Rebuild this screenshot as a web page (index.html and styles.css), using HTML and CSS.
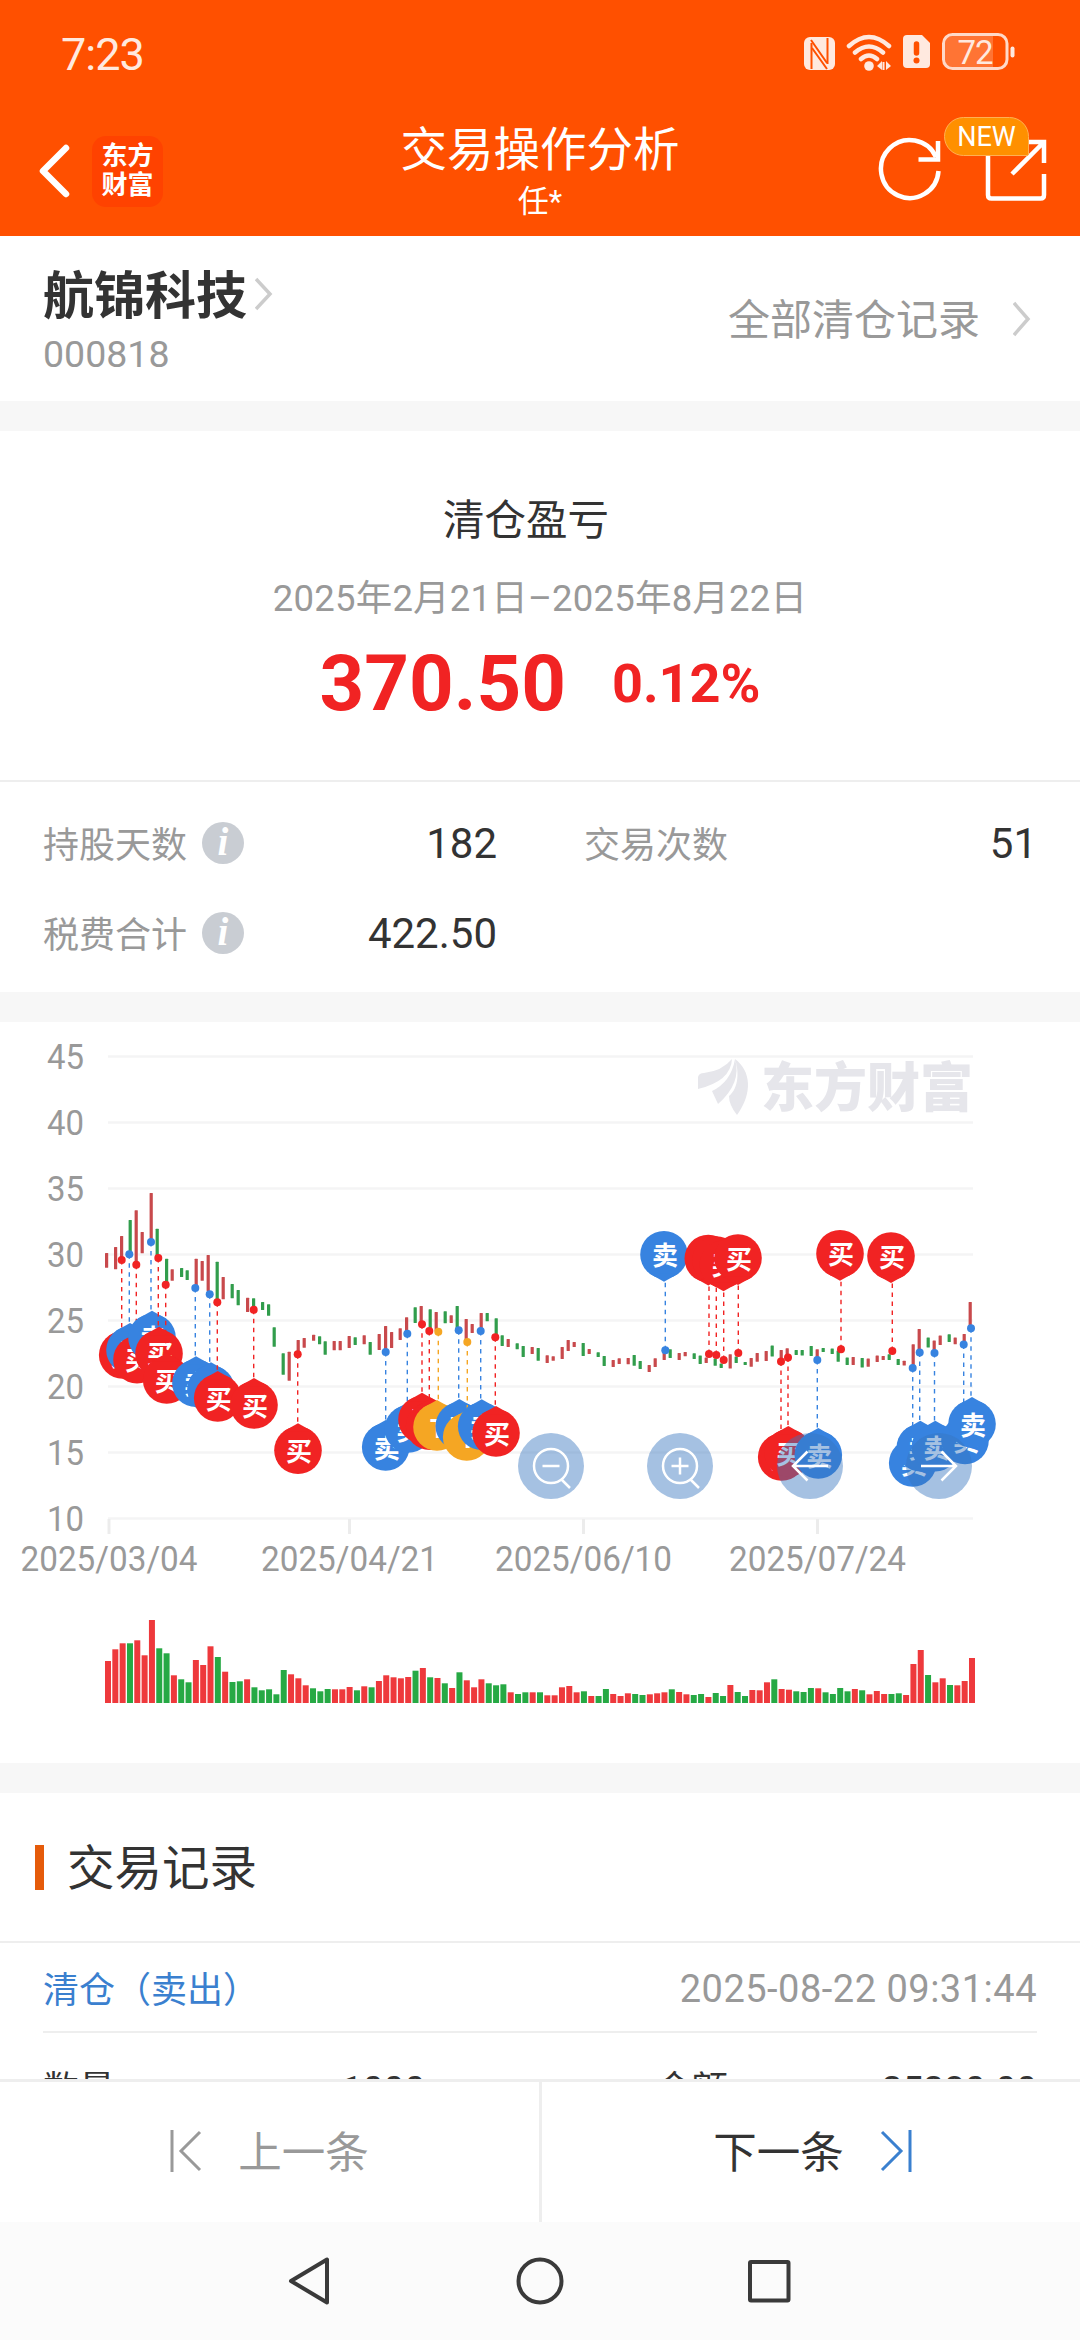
FILE: index.html
```
<!DOCTYPE html>
<html lang="zh-CN">
<head>
	<meta charset="UTF-8">
	<title>交易操作分析</title>
	<link rel="stylesheet" href="styles.css">
</head>
<body>
	<header class="header">
		<div class="status">
			<span class="time">7:23</span>
			<svg class="statusIcons" width="216" height="44" viewBox="800 30 216 44">
				<rect x="804" y="37" width="31" height="33" rx="6" fill="#ffe9df"/>
				<path d="M811.500 69V43M827.500 38v26" fill="none" stroke="#ff5000" stroke-width="2"/>
				<path d="M811 40l16 23M812 48l15 21" fill="none" stroke="#ff5000" stroke-width="2"/>
				<g fill="none" stroke="#ffe9df" stroke-width="4.500" stroke-linecap="round">
					<path d="M849 46q20-18 40 0M855 52.500q14-12 28 0M861 59q8-7 16 0"/>
				</g>
				<circle cx="869" cy="66" r="4.800" fill="#ffe9df"/>
				<path d="M877 66l5-5v9zM891 66l-5-5v9zM882.500 62h2v8h-2z" fill="#ffe9df"/>
				<path d="M907 35h15l8 8v21q0 4-4 4h-19q-4 0-4-4V39q0-4 4-4z" fill="#ffe9df"/>
				<path d="M916.500 44v9" stroke="#ff5000" stroke-width="5.500" stroke-linecap="round"/>
				<circle cx="916.500" cy="60.500" r="3" fill="#ff5000"/>
				<path d="M953 36h40v31h-40q-8 0-8-8V44q0-8 8-8z" fill="#ff7434"/>
				<rect x="943.500" y="34.500" width="63.500" height="34" rx="9" fill="none" stroke="#ffd9c8" stroke-width="3"/>
				<path d="M1012.500 48.500v7" stroke="#ffe9df" stroke-width="4" stroke-linecap="round"/>
				<text class="battery" x="975" y="63.500" text-anchor="middle">72</text>
			</svg>
		</div>
		<div class="navbar">
			<div class="navLeft">
				<svg width="32" height="56" viewBox="0 0 32 56"><path d="M28 5L5 28l23 23" fill="none" stroke="#fff" stroke-width="6.500" stroke-linecap="round" stroke-linejoin="round"/></svg>
				<div class="logo">东方<br>财富</div>
			</div>
			<div class="title">
				<h1>交易操作分析</h1>
				<p>任*</p>
			</div>
			<div class="navRight">
				<svg width="176" height="70" viewBox="873 134 176 70" fill="none" stroke="#fff" stroke-width="4.500">
					<path d="M937.500 171A28.800 29 0 1 1 935 157"/>
					<path d="M937 141v18.500h-19.500"/>
					<path d="M987 150v45q0 3.500 3.500 3.500h49q3.500 0 3.500-3.500V174"/>
					<path d="M1025 142h18v21M1042 143l-31 31"/>
				</svg>
				<span class="badge">NEW</span>
			</div>
		</div>
	</header>

	<section class="stock">
		<div>
			<div class="stockName"><span>航锦科技</span><svg width="18" height="34" viewBox="0 0 18 34"><path d="M1 2l14 15L1 32" fill="none" stroke="#ccc" stroke-width="3.500"/></svg></div>
			<div class="stockCode">000818</div>
		</div>
		<div class="allRecords"><span>全部清仓记录</span><svg width="18" height="36" viewBox="0 0 18 36"><path d="M1 2l14 16L1 34" fill="none" stroke="#ccc" stroke-width="3.500"/></svg></div>
	</section>

	<section class="profit">
		<h2>清仓盈亏</h2>
		<p class="period">2025年2月21日–2025年8月22日</p>
		<p class="amount"><b>370.50</b><b class="rate">0.12%</b></p>
	</section>
	<section class="stats">
		<div class="stat"><span>持股天数</span><i class="info">i</i><em>182</em></div>
		<div class="stat"><span>交易次数</span><em>51</em></div>
		<div class="stat"><span>税费合计</span><i class="info">i</i><em>422.50</em></div>
	</section>

	<section class="chart">
		<svg id="chart" width="1080" height="741" viewBox="0 1022 1080 741"></svg>
		<div class="chartBtns">
			<svg class="chartBtn" viewBox="0 0 66 66"><circle cx="33" cy="33" r="17"/><path d="M24.500 33h17M43 46l9 9"/></svg>
			<svg class="chartBtn" viewBox="0 0 66 66"><circle cx="33" cy="33" r="17"/><path d="M24.500 33h17M33 24.500v17M43 46l9 9"/></svg>
			<svg class="chartBtn" viewBox="0 0 66 66"><path d="M51 33H17M30.500 18.500L16 33l14.500 14.500"/></svg>
			<svg class="chartBtn" viewBox="0 0 66 66"><path d="M15 33h34M35.500 18.500L50 33 35.500 47.500"/></svg>
		</div>
	</section>

	<section class="records">
		<h2><span>交易记录</span></h2>
		<div class="record">
			<div class="recordHead"><span>清仓（卖出）</span><time>2025-08-22 09:31:44</time></div>
			<div class="recordRow"><span>数量</span><span class="qty">1000</span><span>金额</span><span class="sum">25280.00</span></div>
		</div>
	</section>

	<footer class="pager">
		<div class="prev">
			<svg width="32" height="44" viewBox="0 0 32 44" fill="none" stroke="#999" stroke-width="3"><path d="M2 1v42M30 3L11 22l19 19"/></svg>
			<span>上一条</span>
		</div>
		<div class="next">
			<span>下一条</span>
			<svg width="32" height="44" viewBox="0 0 32 44" fill="none" stroke="#3a80cf" stroke-width="3"><path d="M30 1v42M2 3l19 19L2 41"/></svg>
		</div>
	</footer>
	<nav class="sysNav">
		<svg width="1080" height="118" viewBox="0 2222 1080 118" fill="none" stroke="#3a3a3a" stroke-width="4" stroke-linejoin="round">
			<path d="M327 2259.500v43l-36-21.500z"/>
			<circle cx="540" cy="2281" r="21.500"/>
			<rect x="750" y="2262" width="38.500" height="38.500" rx="1"/>
		</svg>
	</nav>

	<script src="chart.js"></script>
</body>
</html>
```
FILE: styles.css
```
* {
	box-sizing: border-box;
}
body {
	margin: 0;
	width: 1080px;
	height: 2340px;
	overflow: hidden;
	display: flex;
	flex-direction: column;
	background-color: #fff;
	color: #333;
	font-family: Roboto, "Noto Sans CJK SC", sans-serif;
}
h1, h2, p {
	margin: 0;
	font-weight: 400;
}
svg {
	display: block;
	flex: none;
}
section, header, footer, nav {
	flex: none;
}
.header {
	height: 236px;
	background-color: #ff5000;
	color: #fff;
}
.status {
	height: 108px;
	padding: 0 64px 0 61px;
	display: flex;
	align-items: center;
	justify-content: space-between;
}
.time {
	font-size: 45px;
	letter-spacing: -1px;
	color: #ffe9df;
}
.statusIcons {
	margin-top: -4px;
}
.battery {
	font-size: 33px;
	letter-spacing: -1px;
	fill: #ffe9df;
}
.navbar {
	height: 128px;
	padding: 10px 30px 0 38px;
	display: grid;
	grid-template-columns: 1fr 400px 1fr;
}
.navLeft {
	display: flex;
	align-items: center;
	gap: 22px;
	height: 108px;
	margin-top: -1px;
}
.logo {
	width: 71px;
	height: 71px;
	padding-top: 6px;
	border-radius: 14px;
	background-color: #ff4200;
	font-size: 26px;
	font-weight: 700;
	line-height: 29px;
	text-align: center;
}
.title {
	text-align: center;
	margin-left: -14px;
	margin-right: -6px;
}
.title h1 {
	font-size: 46.5px;
	line-height: 64px;
}
.title p {
	font-size: 31px;
	line-height: 40px;
}
.navRight {
	position: relative;
	justify-self: end;
	padding-top: 16px;
}
.badge {
	position: absolute;
	left: 70px;
	top: -1px;
	width: 85px;
	height: 39px;
	border: 1px solid #ffb054;
	border-radius: 20px 20px 2px 20px;
	background-color: #ff9000;
	font-size: 27px;
	line-height: 38px;
	text-align: center;
}
.stock {
	height: 195px;
	padding: 29px 49px 0 43px;
	border-bottom: 30px solid #f7f7f7;
	display: flex;
	justify-content: space-between;
}
.stockName {
	display: flex;
	align-items: center;
	gap: 8px;
	height: 58px;
	font-size: 51px;
	font-weight: 700;
}
.stockName span, .allRecords span {
	margin-top: -5px;
}
.stockCode {
	font-size: 37.5px;
	line-height: 62px;
	color: #999;
}
.allRecords {
	display: flex;
	align-items: center;
	gap: 33px;
	height: 108px;
	font-size: 42px;
	color: #999;
}
.profit {
	height: 351px;
	padding-top: 60px;
	border-bottom: 2px solid #eee;
	text-align: center;
}
.profit h2 {
	margin-left: -28px;
	font-size: 41.5px;
	line-height: 60px;
}
.period {
	margin-top: 18px;
	font-size: 36.5px;
	line-height: 60px;
	letter-spacing: .2px;
	color: #999;
}
.amount {
	display: flex;
	justify-content: center;
	align-items: center;
	gap: 46px;
	height: 108px;
	font-size: 78px;
	color: #f12323;
}
.amount .rate {
	font-size: 54px;
}
.stats {
	height: 240px;
	padding: 16px 45px 0 43px;
	border-bottom: 30px solid #f7f7f7;
	display: grid;
	grid-template-columns: 454px 453px;
	grid-auto-rows: 90px;
	column-gap: 87px;
}
.stat {
	display: flex;
	align-items: center;
	font-size: 36px;
	color: #999;
}
.stat span {
	margin-top: -3px;
}
.stat em {
	margin-left: auto;
	font-size: 42px;
	font-style: normal;
	color: #333;
}
.info {
	width: 42px;
	height: 42px;
	margin-left: 15px;
	border-radius: 50%;
	background-color: #c9cdd3;
	color: #fff;
	font: italic 700 39px/39px "Liberation Serif", serif;
	text-align: center;
}
.chart {
	position: relative;
	height: 771px;
	border-bottom: 30px solid #f7f7f7;
}
.axis {
	font-size: 35px;
	fill: #999;
}
.watermark {
	font-size: 53px;
	font-weight: 900;
	fill: #e6e6eb;
}
.pinText {
	font-size: 26px;
	font-weight: 700;
	fill: #fff;
	text-anchor: middle;
}
/* floating over the candles and pins */
.chartBtns {
	position: absolute;
	left: 518px;
	top: 411px;
	display: flex;
	gap: 63.3px;
}
.chartBtn {
	width: 66px;
	height: 66px;
	border-radius: 50%;
	background-color: rgba(55, 118, 191, .45);
	fill: none;
	stroke: #fff;
	stroke-width: 2.5;
}
.records {
	height: 286px;
	overflow: hidden;
}
.records h2 {
	display: flex;
	align-items: center;
	height: 150px;
	padding-left: 35px;
	border-bottom: 2px solid #eee;
	font-size: 47.5px;
}
.records h2 span {
	margin-top: -6px;
}
.records h2::before {
	content: "";
	width: 9px;
	height: 45px;
	margin-right: 23px;
	background-color: #e55b0a;
}
.record {
	padding: 0 43px;
}
.recordHead {
	display: flex;
	justify-content: space-between;
	align-items: center;
	height: 90px;
	border-bottom: 2px solid #eee;
	font-size: 36px;
	color: #3a80cf;
}
.recordHead time {
	font-size: 38px;
	letter-spacing: .5px;
	padding-top: 3px;
	color: #999;
}
.recordRow {
	display: grid;
	grid-template-columns: 299px 314px 1fr auto;
	padding-top: 27px;
	font-size: 36px;
	line-height: 60px;
}
.qty, .sum {
	font-size: 37px;
}
.pager {
	height: 143px;
	border-top: 3px solid #eee;
	display: grid;
	grid-template-columns: 542px 538px;
	font-size: 43.5px;
}
.pager div {
	display: flex;
	align-items: center;
	justify-content: center;
	gap: 36px;
}
.pager span {
	margin-top: -5px;
}
.pager svg {
	margin-top: -2px;
}
.pager .prev {
	color: #999;
	border-right: 3px solid #eee;
}
.pager .next {
	padding-left: 3px;
}
.sysNav {
	height: 118px;
	background-color: #fbfbfb;
}
```
FILE: chart.js
```
var chart = document.getElementById('chart');
var RED = '#c8494c', GREEN = '#319d4c';
var BUY = '#f12323', SELL = '#3783e0', BOTH = '#f5a623';

//x, high, low, color
var candles = [
	[106.7,1253,1267.7,'r'],[115.7,1247,1269.3,'r'],[121.7,1236,1260,'r'],[130.3,1220,1253,'g'],[136.3,1210.3,1265,'r'],
	[142.3,1232,1253.3,'r'],[151.3,1193,1241,'r'],[157.3,1228.7,1257,'g'],[166.7,1258.7,1284,'g'],[172.3,1269.3,1280.7,'r'],
	[181.7,1268,1277,'g'],[187.3,1270.3,1280,'g'],[196.3,1258.7,1286,'r'],[202.3,1261,1280.7,'r'],[208.3,1255,1291,'r'],
	[217.3,1261.7,1301,'g'],[223.3,1277,1299.3,'r'],[232.3,1284,1298.3,'g'],[238.3,1290,1305.3,'g'],[247.7,1297.7,1312,'r'],
	[253.7,1298.3,1309,'g'],[262.7,1302,1310,'g'],[268.7,1304.3,1315.7,'g'],[274.3,1327.3,1346.7,'g'],[283.3,1353.3,1374.7,'g'],
	[289.3,1351.7,1380.7,'r'],[298.3,1340,1354,'r'],[304.3,1338,1347.7,'r'],[313.7,1334.7,1340.7,'r'],[319.7,1336.3,1344.3,'g'],
	[325.3,1341.3,1354.7,'g'],[334.3,1341,1350.3,'r'],[340.3,1341,1350.3,'r'],[349.3,1336,1348,'r'],[355.3,1337.3,1345,'g'],
	[364.3,1335.3,1344.3,'r'],[370.3,1342,1354.7,'g'],[379.3,1334,1350,'r'],[385.7,1326,1352,'r'],[391.7,1332,1348,'r'],
	[400.3,1328.3,1340,'r'],[406.7,1317.3,1333,'r'],[415.3,1307.3,1323,'g'],[421.3,1306,1324,'r'],[430.3,1309.3,1330,'g'],
	[436.3,1312,1331,'r'],[445.3,1311.3,1323.3,'g'],[451.3,1315.3,1323,'r'],[457.3,1306,1330,'g'],[466.3,1319,1341,'r'],
	[472.3,1324,1333,'r'],[481.3,1313,1330,'r'],[487.3,1313,1321.3,'g'],[496.3,1318.3,1337,'g'],[502.3,1335.3,1346,'g'],
	[508.3,1339,1347,'r'],[517.3,1343.3,1349.3,'g'],[523.3,1346,1357,'g'],[532.3,1347,1354,'r'],[538.3,1348,1360.7,'g'],
	[547.3,1355.3,1363,'r'],[553.3,1356.3,1360.7,'r'],[562.3,1347,1359,'r'],[568.3,1340,1351,'r'],[574.3,1342,1347,'r'],
	[583.3,1343,1356,'g'],[589.3,1349,1354,'r'],[598.3,1352.3,1357,'g'],[604.3,1356,1366,'g'],[613.3,1360,1367,'r'],
	[619.3,1358.3,1364,'r'],[628.3,1358,1364.3,'r'],[634.3,1355,1365.7,'g'],[640.3,1361,1369,'g'],[649.3,1365,1372,'r'],
	[655.3,1358.3,1367,'r'],[664.3,1350,1360,'r'],[670.3,1349.3,1358,'g'],[679.3,1353,1360,'r'],[685.3,1352,1356.3,'r'],
	[694.3,1353.3,1359,'g'],[700.3,1355.4,1364,'g'],[706.3,1357.5,1363,'r'],[715.3,1358.6,1365.7,'g'],[721.3,1363.6,1368,'g'],
	[730.3,1354.3,1368.6,'r'],[736.3,1356.4,1363,'g'],[745.3,1362,1365,'g'],[751.3,1358,1366.8,'r'],[757.3,1353,1361.8,'r'],
	[766.3,1351,1361,'r'],[772.3,1345.4,1356.4,'g'],[781.3,1350,1361,'r'],[787.3,1348.2,1357.5,'r'],[796.3,1350,1355,'g'],
	[802.3,1350,1355.4,'g'],[811.3,1346,1356,'g'],[817.3,1349.3,1359.3,'r'],[823.3,1348,1352,'g'],[832.3,1348.6,1354,'g'],
	[838.3,1350.4,1361.8,'g'],[847.3,1357.5,1365,'g'],[853.3,1357,1365,'r'],[862.3,1358,1367.5,'g'],[868.3,1358.6,1366.8,'r'],
	[877.3,1355.4,1362,'r'],[883.3,1356,1360,'r'],[889.3,1354.3,1360,'g'],[898.3,1359,1365,'g'],[904.3,1360.7,1365.4,'r'],
	[913.3,1344.3,1368,'r'],[919.3,1329,1352,'r'],[928.3,1337.5,1347.5,'g'],[934.3,1340.4,1353,'r'],[940.3,1335.4,1345,'r'],
	[949.3,1334.3,1342,'g'],[955.3,1337.5,1344.3,'r'],[964.3,1334,1344.6,'r'],[970.3,1302,1328,'r']
];

//volume, same order of days, negative on a falling day
var volumes = [
	42,53.7,59.7,-59.7,62.7,47.7,83,-54.7,-49.7,27.7,-23.7,-20.7,43,38,56.7,-46,31.3,-21,-21.7,23.7,
	-15.7,-12.7,-13.7,-8.7,-33,28.7,24.7,17.7,-14.7,-11.7,-14,13.7,13.7,16,-12.7,16.7,-15.7,22,27.7,25.7,
	24.7,26,-32.3,35,-25.7,25,-19.7,15,-30.7,22.7,15.7,23.7,-19.7,-17.7,-18.7,10.7,-9,-10.7,10.7,-10.7,
	7.7,7.7,15.7,17,10.7,-11.7,7,-7,-14,9,7,9.7,-9,-8,8.7,9.7,10.7,-13.7,11,8.7,
	-8,-9,6,-10,-7,18,-11,-7,13,12.7,20.7,-23.7,14,13.3,-11.7,-11,-15,14.7,-10.7,-9,
	-15,-11.7,14,-12.7,8.7,12,9,-9,-9.7,8,39,53,-28,20.7,24.7,-18,17.7,22,45
];

//dot x, dot y, pin x, pin center y, type
var pins = [
	[121.7,1260,122.7,1355,'b'],[129.3,1254.3,130,1350,'s'],[136.3,1264.7,137,1359.7,'b'],[151,1242,152,1337.7,'s'],
	[158.3,1258,159,1353.7,'b'],[165.7,1284.7,166.7,1380,'b'],[195.3,1288,196,1383.3,'s'],[209.7,1294.3,211,1389.3,'s'],
	[217.3,1302.3,217.7,1398,'b'],[253.7,1309.7,254,1405,'b'],[297.7,1354.3,298,1450.3,'b'],
	[385.7,1352,385.7,1447,'s'],[407.3,1333.7,408.3,1429,'s'],[422,1324.3,422,1419.7,'b'],[429.3,1331,429.7,1426.3,'b'],
	[438.3,1331.7,437,1427,'t'],[458.7,1330.3,459.3,1426,'s'],[467.3,1342,466.7,1437,'t'],[480.7,1331,481.7,1426.3,'s'],
	[495.3,1337.3,496,1433,'b'],
	[665.3,1350.3,664,1254.7,'s'],[709,1354,708.3,1258.6,'b'],[716.3,1355,716,1260,'b'],[723.7,1360,723.5,1264.3,'b'],
	[738.3,1353,738,1258,'b'],[781,1361.4,781.7,1457,'b'],[788,1357.5,788.3,1453,'b'],[817.3,1360,818.3,1455,'s'],
	[841,1349.3,840,1253.7,'b'],[892.3,1351,891,1256,'b'],
	[912.7,1368,912.7,1463,'s'],[919.7,1352.5,920.3,1447.7,'s'],[934.5,1353,935.3,1447.7,'s'],
	[963.7,1344.6,965,1440.4,'s'],[971,1328.2,972,1424,'s']
];

function draw(tag, attrs, text){
	var el = document.createElementNS('http://www.w3.org/2000/svg', tag);
	for (var key in attrs) {
		el.setAttribute(key, attrs[key]);
	}
	if(text){
		el.textContent = text;
	}
	chart.appendChild(el);
}

function drawGrid(){
	for (var i = 0; i < 8; i++) {
		var y = 1056.5 + i * 66;
		draw('path', {d: 'M108 ' + y + 'H973', stroke: '#f4f4f5', 'stroke-width': 2.5});
		draw('text', {x: 47, y: y + 12, textLength: 37, lengthAdjust: 'spacingAndGlyphs', 'class': 'axis'}, String(45 - i * 5));
	}
	var dates = [[109, '2025/03/04'], [349.5, '2025/04/21'], [583.5, '2025/06/10'], [817.5, '2025/07/24']];
	dates.forEach(function(d){
		draw('path', {d: 'M' + d[0] + ' 1519v15', stroke: '#ececec', 'stroke-width': 3});
		draw('text', {x: d[0] - 88.5, y: 1571, textLength: 177, lengthAdjust: 'spacingAndGlyphs', 'class': 'axis'}, d[1]);
	});
}

function drawWatermark(){
	draw('path', {d: 'M698 1077q1-4 6-4 18-2 28-14-1 22-34 30zM712 1091q19-9 23-32 7 24-17 45zM729 1096c10-8 10-25 6-37 16 12 18 34 2 56q-8-10-8-19z', fill: '#e6e6eb'});
	draw('text', {x: 761, y: 1107, textLength: 212, 'class': 'watermark'}, '东方财富');
}

function drawPin(p){
	var color = {b: BUY, s: SELL, t: BOTH}[p[4]];
	var label = {b: '买', s: '卖', t: 'T'}[p[4]];
	var dir = p[3] > p[1] ? -1 : 1; //side of the tip
	var x = p[2], y = p[3], tip = y + dir * 27;
	draw('path', {d: 'M' + p[0] + ' ' + p[1] + 'V' + tip, stroke: color, 'stroke-width': 1.4, 'stroke-dasharray': '4.5 4.5'});
	draw('circle', {cx: p[0], cy: p[1], r: 4, fill: color});
	draw('circle', {cx: x, cy: y, r: 23.8, fill: color});
	draw('path', {d: 'M' + (x - 15) + ' ' + (y + dir * 18.5) + 'L' + x + ' ' + tip + 'L' + (x + 15) + ' ' + (y + dir * 18.5) + 'z', fill: color});
	draw('text', {x: x + 1, y: y + 10.5, 'class': 'pinText'}, label);
}

drawGrid();
drawWatermark();
candles.forEach(function(c){
	draw('rect', {x: c[0] - 1.7, y: c[1], width: 3.2, height: c[2] - c[1], rx: .5, fill: c[3] === 'r' ? RED : GREEN});
});
pins.forEach(drawPin);
volumes.forEach(function(v, i){
	var h = Math.abs(v);
	draw('rect', {x: 105 + i * 7.322, y: 1703 - h, width: 6, height: h, fill: v > 0 ? '#ee393c' : '#26a944'});
});
```
